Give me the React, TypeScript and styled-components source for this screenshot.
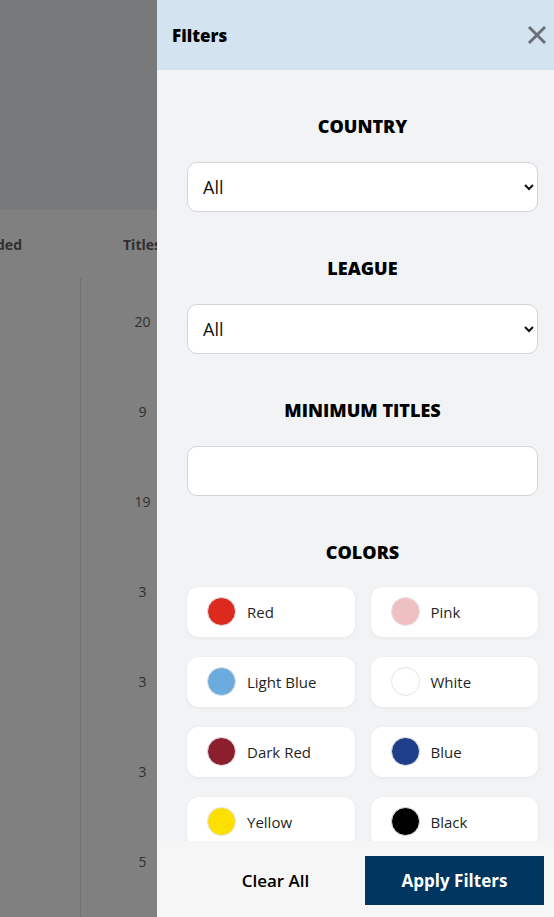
import React from "react";
import styled, { createGlobalStyle } from "styled-components";

const GlobalStyle = createGlobalStyle`
  html, body { margin: 0; padding: 0; height: 100%; overflow: hidden; }
  body { font-family: "Open Sans", "Noto Sans", sans-serif; background: #808080; }
  * { box-sizing: border-box; }
`;

const Page = styled.div`
  width: 100%;
  height: 917px;
  overflow: hidden;
  background: #808080;
`;

const PageHero = styled.div`
  height: 210px;
  background: #78797b;
`;

const Table = styled.div`
  display: grid;
  grid-template-columns: 80px 124px 1fr;
`;

const HeadCell = styled.div<{ $align: "left" | "center" }>`
  height: 68px;
  display: flex;
  align-items: center;
  justify-content: ${(p) => (p.$align === "center" ? "center" : "flex-end")};
  padding-right: ${(p) => (p.$align === "center" ? "0" : "58px")};
  overflow: hidden;
  white-space: nowrap;
  font-weight: 700;
  font-size: 14px;
  color: #2f2f2f;
`;

const BodyCell = styled.div<{ $divider?: boolean }>`
  height: 90px;
  display: flex;
  align-items: center;
  justify-content: center;
  padding-bottom: 3px;
  font-size: 14px;
  color: #2f2f2f;
  border-left: ${(p) => (p.$divider ? "1px solid #727272" : "none")};
`;

const Drawer = styled.aside`
  position: fixed;
  top: 0;
  right: 0;
  width: 397px;
  height: 917px;
  display: flex;
  flex-direction: column;
  background: #f2f3f5;
`;

const DrawerHeader = styled.header`
  height: 70px;
  flex: none;
  display: flex;
  align-items: center;
  justify-content: space-between;
  padding: 0 6px 0 15px;
  background: #d3e4f0;
`;

const DrawerTitle = styled.h2`
  margin: 0;
  font-size: 17px;
  font-weight: 800;
  color: #000;
`;

const CloseButton = styled.button`
  border: none;
  background: transparent;
  padding: 0;
  width: 22px;
  height: 22px;
  display: flex;
  align-items: center;
  justify-content: center;
  cursor: pointer;
`;

const DrawerBody = styled.div`
  flex: 1;
  overflow: hidden;
  padding: 42px 16px 0 30px;
  display: flex;
  flex-direction: column;
  gap: 42px;
`;

const Section = styled.section`
  display: flex;
  flex-direction: column;
`;

const SectionTitle = styled.h3`
  margin: 0 0 22px;
  text-align: center;
  font-size: 18px;
  line-height: 28px;
  font-weight: 800;
  color: #000;
`;

const Select = styled.select`
  height: 50px;
  width: 100%;
  padding: 0 8px 0 11px;
  font-family: inherit;
  font-size: 18px;
  color: #111;
  background: #fff;
  border: 1px solid #d4d4d8;
  border-radius: 10px;
`;

const NumberInput = styled.input`
  height: 50px;
  width: 100%;
  padding: 0 15px;
  font-family: inherit;
  font-size: 18px;
  background: #fff;
  border: 1px solid #d4d4d8;
  border-radius: 10px;
`;

const ColorGrid = styled.div`
  display: grid;
  grid-template-columns: 1fr 1fr;
  column-gap: 16px;
  row-gap: 20px;
  margin-top: -1px;
`;

const ColorCard = styled.label`
  height: 50px;
  display: flex;
  align-items: center;
  gap: 11px;
  padding: 0 0 1px 20px;
  background: #fff;
  border-radius: 12px;
  box-shadow: 0 1px 4px rgba(0, 0, 0, 0.05);
  font-size: 15px;
  color: #1f1f1f;
  cursor: pointer;
`;

const Swatch = styled.span<{ $color: string }>`
  width: 29px;
  height: 29px;
  border-radius: 50%;
  background: ${(p) => p.$color};
  border: 1px solid #e4e4e7;
  flex: none;
`;

const DrawerFooter = styled.footer`
  height: 76px;
  flex: none;
  display: grid;
  grid-template-columns: 1fr 1fr;
  padding: 15px 10px 12px 29px;
  background: #f6f6f6;
`;

const FooterButton = styled.button<{ $primary?: boolean }>`
  border: none;
  font-family: inherit;
  font-size: 17px;
  line-height: 24px;
  font-weight: ${(p) => (p.$primary ? 700 : 600)};
  color: ${(p) => (p.$primary ? "#fff" : "#000")};
  background: ${(p) => (p.$primary ? "#003660" : "transparent")};
  cursor: pointer;
`;

const rows: (number | null)[] = [20, 9, 19, 3, 3, 3, 5, null];

const colors = [
  { name: "Red", hex: "#dc2a1f" },
  { name: "Pink", hex: "#efc0c2" },
  { name: "Light Blue", hex: "#6babdd" },
  { name: "White", hex: "#ffffff" },
  { name: "Dark Red", hex: "#8b1f2e" },
  { name: "Blue", hex: "#1f3f8a" },
  { name: "Yellow", hex: "#fde000" },
  { name: "Black", hex: "#000000" },
];

export default function App() {
  return (
    <>
      <GlobalStyle />
      <Page>
        <PageHero />
        <Table>
          <HeadCell $align="left">Founded</HeadCell>
          <HeadCell $align="center">Titles</HeadCell>
          <HeadCell $align="center">Stadium</HeadCell>
          {rows.map((n, i) => (
            <React.Fragment key={i}>
              <BodyCell />
              <BodyCell $divider>{n}</BodyCell>
              <BodyCell />
            </React.Fragment>
          ))}
        </Table>
      </Page>
      <Drawer>
        <DrawerHeader>
          <DrawerTitle>Filters</DrawerTitle>
          <CloseButton aria-label="Close">
            <svg width="20" height="20" viewBox="0 0 20 20">
              <path d="M2 2 L18 18 M18 2 L2 18" stroke="#6b6f77" strokeWidth="3" strokeLinecap="butt" />
            </svg>
          </CloseButton>
        </DrawerHeader>
        <DrawerBody>
          <Section>
            <SectionTitle>COUNTRY</SectionTitle>
            <Select defaultValue="all">
              <option value="all">All</option>
            </Select>
          </Section>
          <Section>
            <SectionTitle>LEAGUE</SectionTitle>
            <Select defaultValue="all">
              <option value="all">All</option>
            </Select>
          </Section>
          <Section>
            <SectionTitle>MINIMUM TITLES</SectionTitle>
            <NumberInput type="number" />
          </Section>
          <Section>
            <SectionTitle>COLORS</SectionTitle>
            <ColorGrid>
              {colors.map((c) => (
                <ColorCard key={c.name}>
                  <Swatch $color={c.hex} />
                  {c.name}
                </ColorCard>
              ))}
            </ColorGrid>
          </Section>
        </DrawerBody>
        <DrawerFooter>
          <FooterButton>Clear All</FooterButton>
          <FooterButton $primary>Apply Filters</FooterButton>
        </DrawerFooter>
      </Drawer>
    </>
  );
}
